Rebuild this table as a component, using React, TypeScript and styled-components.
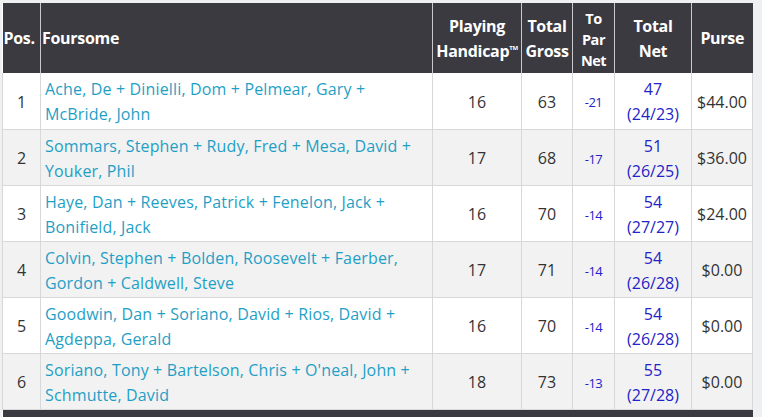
import React from 'react';
import { styled, createGlobalStyle } from 'styled-components';

const GlobalStyle = createGlobalStyle`
  html, body {
    margin: 0;
    padding: 0;
    background: #eef0f2;
    font-family: "Open Sans", Lato, Arial, sans-serif;
  }
`;

type Row = {
  pos: number;
  names: string;
  hcp: number;
  gross: number;
  toPar: number;
  net: number;
  split: string;
  purse: string;
};

const rows: Row[] = [
  { pos: 1, names: 'Ache, De + Dinielli, Dom + Pelmear, Gary + McBride, John', hcp: 16, gross: 63, toPar: -21, net: 47, split: '24/23', purse: '$44.00' },
  { pos: 2, names: 'Sommars, Stephen + Rudy, Fred + Mesa, David + Youker, Phil', hcp: 17, gross: 68, toPar: -17, net: 51, split: '26/25', purse: '$36.00' },
  { pos: 3, names: 'Haye, Dan + Reeves, Patrick + Fenelon, Jack + Bonifield, Jack', hcp: 16, gross: 70, toPar: -14, net: 54, split: '27/27', purse: '$24.00' },
  { pos: 4, names: 'Colvin, Stephen + Bolden, Roosevelt + Faerber, Gordon + Caldwell, Steve', hcp: 17, gross: 71, toPar: -14, net: 54, split: '26/28', purse: '$0.00' },
  { pos: 5, names: 'Goodwin, Dan + Soriano, David + Rios, David + Agdeppa, Gerald', hcp: 16, gross: 70, toPar: -14, net: 54, split: '26/28', purse: '$0.00' },
  { pos: 6, names: "Soriano, Tony + Bartelson, Chris + O'neal, John + Schmutte, David", hcp: 18, gross: 73, toPar: -13, net: 55, split: '27/28', purse: '$0.00' },
];

const Page = styled.div`
  padding: 3px 10px 0 2px;
`;

const Table = styled.table`
  width: 750px;
  border-collapse: collapse;
  table-layout: fixed;
  background: #fff;
`;

const Head = styled.th<{ $small?: boolean; $align?: string }>`
  background: #3b3a40;
  color: #fff;
  font-weight: 700;
  font-size: ${(p) => (p.$small ? '14.5px' : '16px')};
  line-height: ${(p) => (p.$small ? '21px' : '25px')};
  letter-spacing: ${(p) => (p.$small ? '-0.5px' : '-0.3px')};
  text-align: ${(p) => p.$align || 'center'};
  padding: ${(p) => (p.$small ? '4px 0 2px' : '1px 1px 0')};
  height: 70px;
  box-sizing: border-box;
  border-left: 1px solid #c9c9cc;
  white-space: nowrap;
  &:first-child {
    border-left: none;
  }
`;

const Tm = styled.sup`
  font-size: 6px;
  vertical-align: top;
  position: relative;
  top: -3px;
`;

const BodyRow = styled.tr<{ $alt: boolean }>`
  background: ${(p) => (p.$alt ? '#f2f2f2' : '#fff')};
`;

const Cell = styled.td<{ $align?: string }>`
  border: 1px solid #d6d8da;
  border-top: none;
  color: #333;
  font-size: 16px;
  line-height: 25px;
  height: 56px;
  box-sizing: border-box;
  padding: 4px 4px 1px;
  text-align: ${(p) => p.$align || 'center'};
  vertical-align: middle;
  white-space: ${(p) => (p.$align === 'left' ? 'normal' : 'nowrap')};
`;

const Names = styled.a`
  color: #1f9fc6;
  text-decoration: none;
  letter-spacing: 0.15px;
`;

const ToPar = styled.span`
  color: #2323c8;
  font-size: 13px;
  letter-spacing: -0.5px;
`;

const Net = styled.span`
  color: #2323c8;
`;

const FootCell = styled.td`
  background: #3b3a40;
  height: 40px;
`;

export default function App() {
  return (
    <Page>
      <GlobalStyle />
      <Table>
        <colgroup>
          <col style={{ width: 38 }} />
          <col style={{ width: 392 }} />
          <col style={{ width: 89 }} />
          <col style={{ width: 51 }} />
          <col style={{ width: 42 }} />
          <col style={{ width: 77 }} />
          <col style={{ width: 61 }} />
        </colgroup>
        <thead>
          <tr>
            <Head $align="left">Pos.</Head>
            <Head $align="left">Foursome</Head>
            <Head>
              Playing
              <br />
              Handicap<Tm>TM</Tm>
            </Head>
            <Head>
              Total
              <br />
              Gross
            </Head>
            <Head $small>
              To
              <br />
              Par
              <br />
              Net
            </Head>
            <Head>
              Total
              <br />
              Net
            </Head>
            <Head>Purse</Head>
          </tr>
        </thead>
        <tbody>
          {rows.map((r, i) => (
            <BodyRow key={r.pos} $alt={i % 2 === 1}>
              <Cell>{r.pos}</Cell>
              <Cell $align="left">
                <Names href="#">{r.names}</Names>
              </Cell>
              <Cell>{r.hcp}</Cell>
              <Cell>{r.gross}</Cell>
              <Cell>
                <ToPar>{r.toPar}</ToPar>
              </Cell>
              <Cell>
                <Net>
                  {r.net}
                  <br />({r.split})
                </Net>
              </Cell>
              <Cell>{r.purse}</Cell>
            </BodyRow>
          ))}
        </tbody>
        <tfoot>
          <tr>
            <FootCell colSpan={7} />
          </tr>
        </tfoot>
      </Table>
    </Page>
  );
}
